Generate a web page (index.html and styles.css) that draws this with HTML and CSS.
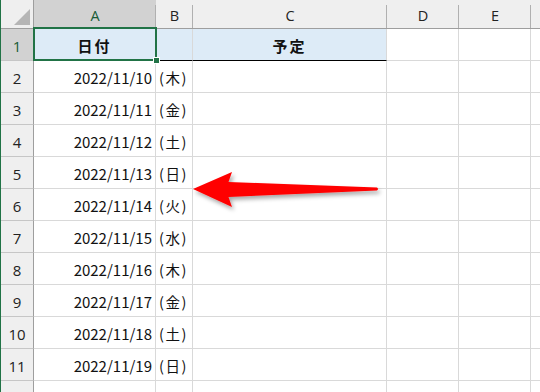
FILE: index.html
```html
<!DOCTYPE html>
<html lang="ja">
<head>
<meta charset="utf-8">
<link rel="stylesheet" href="styles.css">
</head>
<body>
<div class="sheet">
  <div class="grid">
    <div class="hd corner"><span class="tri"></span></div>
    <div class="hd col sel">A</div>
    <div class="hd col">B</div>
    <div class="hd col">C</div>
    <div class="hd col">D</div>
    <div class="hd col">E</div>
    <div class="hd col last"></div>

    <div class="hd row sel">1</div>
    <div class="c title">日付</div>
    <div class="c title"></div>
    <div class="c title">予定</div>
    <div class="c"></div><div class="c"></div><div class="c last"></div>

    <div class="hd row">2</div><div class="c date">2022/11/10</div><div class="c day">(木)</div><div class="c"></div><div class="c"></div><div class="c"></div><div class="c last"></div>
    <div class="hd row">3</div><div class="c date">2022/11/11</div><div class="c day">(金)</div><div class="c"></div><div class="c"></div><div class="c"></div><div class="c last"></div>
    <div class="hd row">4</div><div class="c date">2022/11/12</div><div class="c day">(土)</div><div class="c"></div><div class="c"></div><div class="c"></div><div class="c last"></div>
    <div class="hd row">5</div><div class="c date">2022/11/13</div><div class="c day">(日)</div><div class="c"></div><div class="c"></div><div class="c"></div><div class="c last"></div>
    <div class="hd row">6</div><div class="c date">2022/11/14</div><div class="c day">(火)</div><div class="c"></div><div class="c"></div><div class="c"></div><div class="c last"></div>
    <div class="hd row">7</div><div class="c date">2022/11/15</div><div class="c day">(水)</div><div class="c"></div><div class="c"></div><div class="c"></div><div class="c last"></div>
    <div class="hd row">8</div><div class="c date">2022/11/16</div><div class="c day">(木)</div><div class="c"></div><div class="c"></div><div class="c"></div><div class="c last"></div>
    <div class="hd row">9</div><div class="c date">2022/11/17</div><div class="c day">(金)</div><div class="c"></div><div class="c"></div><div class="c"></div><div class="c last"></div>
    <div class="hd row">10</div><div class="c date">2022/11/18</div><div class="c day">(土)</div><div class="c"></div><div class="c"></div><div class="c"></div><div class="c last"></div>
    <div class="hd row">11</div><div class="c date">2022/11/19</div><div class="c day">(日)</div><div class="c"></div><div class="c"></div><div class="c"></div><div class="c last"></div>
    <div class="hd row"></div><div class="c"></div><div class="c"></div><div class="c"></div><div class="c"></div><div class="c"></div><div class="c last"></div>
  </div>
  <div class="selbox"><span class="handle"></span></div>
  <svg class="arrow" width="220" height="70" viewBox="0 0 220 70">
    <defs>
      <filter id="sh" x="-20%" y="-40%" width="140%" height="180%">
        <feDropShadow dx="2" dy="3" stdDeviation="2.2" flood-color="#000" flood-opacity="0.35"/>
      </filter>
    </defs>
    <path filter="url(#sh)" fill="#ff0000" d="M13 34 L52 17 L48.5 27 L197 32.5 Q199 34 197 35.5 L48.5 42 L52 52 Z"/>
  </svg>
</div>
</body>
</html>
```
FILE: styles.css
```css
html, body {
  margin: 0;
  padding: 0;
  background: #ffffff;
}
body {
  font-family: "Noto Sans CJK JP", "Noto Sans", sans-serif;
  overflow: hidden;
  width: 540px;
  height: 392px;
}
.sheet {
  position: relative;
  width: 540px;
  height: 392px;
  border-left: 1px solid #217346;
  box-sizing: border-box;
  overflow: hidden;
}
.grid {
  display: grid;
  grid-template-columns: 33px 122px 37px 194px 72px 72px 40px;
  grid-template-rows: 29px repeat(12, 32px);
}
.grid > div {
  box-sizing: border-box;
}
.hd {
  background: #efefef;
  color: #222;
  display: flex;
  align-items: center;
  justify-content: center;
}
.col {
  border-bottom: 1px solid #9e9e9e;
  font-family: "Open Sans", "Noto Sans", sans-serif;
  font-size: 14.5px;
  padding-top: 3px;
  background: linear-gradient(#b0b0b0, #b0b0b0) right 5px / 1px calc(100% - 5px) no-repeat, #efefef;
}
.col.last { background: #efefef; }
.col.sel {
  background: linear-gradient(#b0b0b0, #b0b0b0) right 5px / 1px calc(100% - 5px) no-repeat, #d2d2d2;
}
.corner {
  border-bottom: 1px solid #9e9e9e;
  border-right: 1px solid #9e9e9e;
  position: relative;
}
.tri {
  position: absolute;
  right: 3px;
  bottom: 3px;
  width: 0;
  height: 0;
  border-left: 16px solid transparent;
  border-bottom: 16px solid #b5b5b5;
}
.row {
  border-bottom: 1px solid #c6c6c6;
  border-right: 1px solid #9e9e9e;
  font-family: "Open Sans", "Noto Sans", sans-serif;
  font-size: 15px;
  padding-top: 2px;
}
.hd.sel {
  color: #185c37;
}
.row.sel {
  background: #d2d2d2;
}
.c {
  border-right: 1px solid #d9d9d9;
  border-bottom: 1px solid #d9d9d9;
  font-size: 15px;
  color: #111;
  display: flex;
  align-items: center;
  white-space: nowrap;
  overflow: hidden;
}
.c.last { border-right: none; }
.title {
  background: #ddebf7;
  border-bottom: 1px solid #000;
  justify-content: center;
  font-weight: bold;
  letter-spacing: 2px;
  padding-top: 1px;
}
.date {
  justify-content: flex-end;
  padding-right: 3px;
  padding-top: 1px;
}
.day {
  padding-left: 3px;
  padding-top: 1px;
  font-size: 14.5px;
  letter-spacing: 1.5px;
}
.selbox {
  position: absolute;
  left: 32px;
  top: 27px;
  width: 124px;
  height: 34px;
  border: 2px solid #217346;
  box-sizing: border-box;
}
.handle {
  position: absolute;
  right: -5px;
  bottom: -5px;
  width: 5px;
  height: 5px;
  background: #217346;
  border: 1px solid #fff;
}
.arrow {
  position: absolute;
  left: 179px;
  top: 155px;
}
```
